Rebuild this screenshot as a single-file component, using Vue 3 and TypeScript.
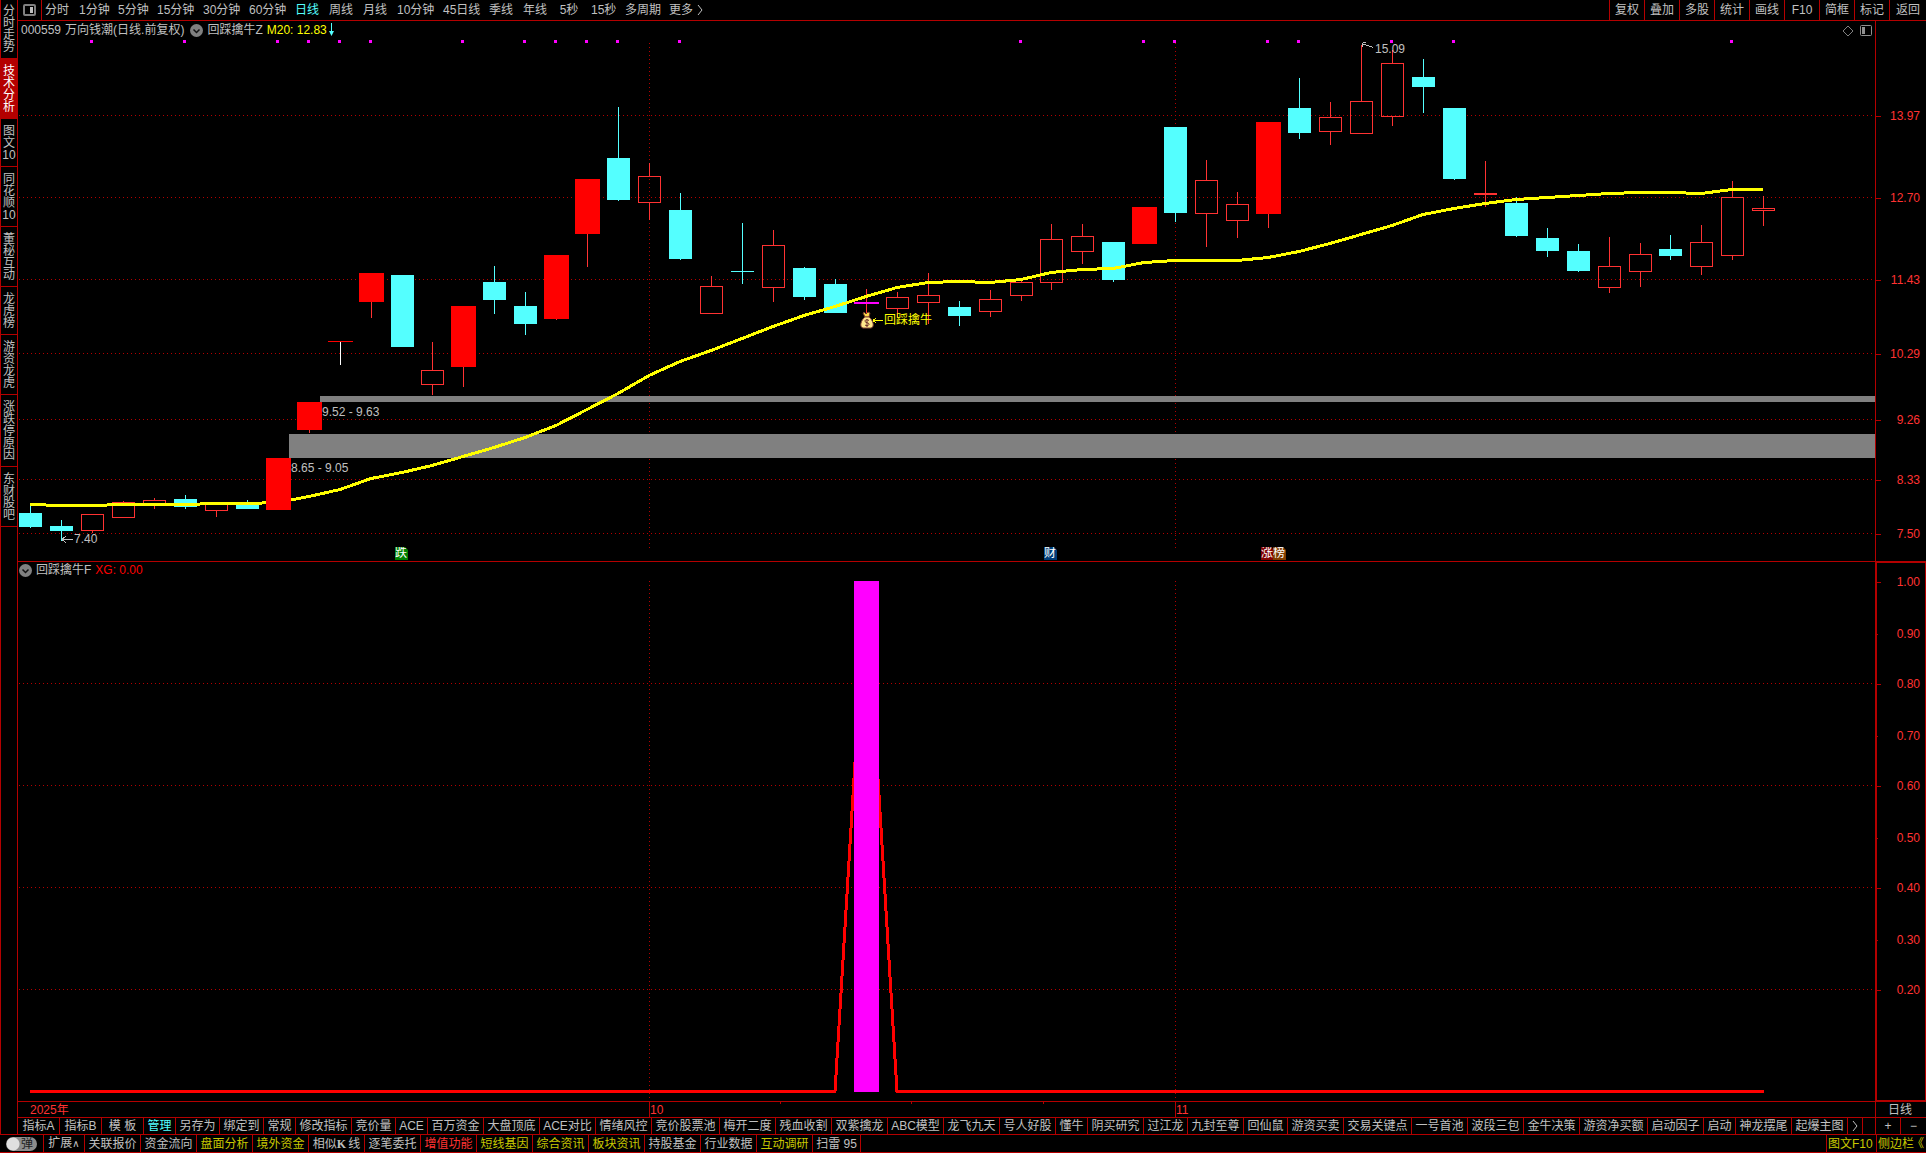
<script setup lang="ts">
interface Tab { text: string; size: string; tone?: string }

const sideTabs: { lines: string[]; active?: boolean }[] = [
  { lines: ['分', '时', '走', '势'] },
  { lines: ['技', '术', '分', '析'], active: true },
  { lines: ['图', '文', '10'] },
  { lines: ['同', '花', '顺', '10'] },
  { lines: ['董', '秘', '互', '动'] },
  { lines: ['龙', '虎', '榜'] },
  { lines: ['游', '资', '龙', '虎'] },
  { lines: ['涨', '跌', '停', '原', '因'] },
  { lines: ['东', '财', '股', '吧'] },
]

const periods: Tab[] = [
  { text: '分时', size: 'p2' }, { text: '1分钟', size: 'p3' }, { text: '5分钟', size: 'p3' },
  { text: '15分钟', size: 'p5' }, { text: '30分钟', size: 'p5' }, { text: '60分钟', size: 'p5' },
  { text: '日线', size: 'p2', tone: 'cyan' }, { text: '周线', size: 'p2' }, { text: '月线', size: 'p2' },
  { text: '10分钟', size: 'p5' }, { text: '45日线', size: 'p5' }, { text: '季线', size: 'p2' },
  { text: '年线', size: 'p2' }, { text: '5秒', size: 'p2' }, { text: '15秒', size: 'p2' },
  { text: '多周期', size: 'p4' }, { text: '更多', size: 'p1' },
]

const tools = ['复权', '叠加', '多股', '统计', '画线', 'F10', '简框', '标记', '返回']

const templates: Tab[] = [
  { text: '指标A', size: 'n1' }, { text: '指标B', size: 'n1' }, { text: '模 板', size: 'n1' },
  { text: '管理', size: 'n2', tone: 'cyan' }, { text: '另存为', size: 'n3' }, { text: '绑定到', size: 'n3' },
  { text: '常规', size: 'n2' }, { text: '修改指标', size: 'n4' }, { text: '竞价量', size: 'n3' },
  { text: 'ACE', size: 'n2' }, { text: '百万资金', size: 'n4' }, { text: '大盘顶底', size: 'n4' },
  { text: 'ACE对比', size: 'n4' }, { text: '情绪风控', size: 'n4' }, { text: '竞价股票池', size: 'n5' },
  { text: '梅开二度', size: 'n4' }, { text: '残血收割', size: 'n4' }, { text: '双紫擒龙', size: 'n4' },
  { text: 'ABC模型', size: 'n4' }, { text: '龙飞九天', size: 'n4' }, { text: '号人好股', size: 'n4' },
  { text: '懂牛', size: 'n2' }, { text: '阴买研究', size: 'n4' }, { text: '过江龙', size: 'n3' },
  { text: '九封至尊', size: 'n4' }, { text: '回仙鼠', size: 'n3' }, { text: '游资买卖', size: 'n4' },
  { text: '交易关键点', size: 'n5' }, { text: '一号首池', size: 'n4' }, { text: '波段三包', size: 'n4' },
  { text: '金牛决策', size: 'n4' }, { text: '游资净买额', size: 'n5' }, { text: '启动因子', size: 'n4' },
  { text: '启动', size: 'n2' }, { text: '神龙摆尾', size: 'n4' }, { text: '起爆主图', size: 'n4' },
]

const services: Tab[] = [
  { text: '关联报价', size: 'n4' }, { text: '资金流向', size: 'n4' },
  { text: '盘面分析', size: 'n4', tone: 'gold' }, { text: '境外资金', size: 'n4', tone: 'gold' },
  { text: '相似K线', size: 'n4' }, { text: '逐笔委托', size: 'n4' },
  { text: '增值功能', size: 'n4', tone: 'rose' }, { text: '短线基因', size: 'n4', tone: 'gold' },
  { text: '综合资讯', size: 'n4', tone: 'gold' }, { text: '板块资讯', size: 'n4', tone: 'gold' },
  { text: '持股基金', size: 'n4' }, { text: '行业数据', size: 'n4' },
  { text: '互动调研', size: 'n4', tone: 'gold' }, { text: '扫雷 95', size: 'n6' },
]

// Drawing space shared by both panes; each pane is 1857 x 540 units.
const X0 = 18
const W = 1857
const H = 540
const TOP1 = 21
const TOP2 = 561
const pctX = (x: number) => `${((x - X0) / W) * 100}%`
const pctY = (y: number, top: number) => `${((y - top) / H) * 100}%`

// Centre column of the i-th trading day.
const cx = (i: number) => 30 + 31 * i - Math.floor((i + 7) / 20)

// c = falling, h = rising (hollow), r = limit-up block; then high, body top, body bottom, low
type Candle = ['c' | 'h' | 'r', number, number, number, number]
const candles: Candle[] = [
  ['c', 505, 513, 527, 528], ['c', 520, 526, 531, 541], ['h', 514, 514, 531, 533], ['h', 501, 502, 518, 518],
  ['h', 498, 500, 504, 509], ['c', 495, 499, 507, 509], ['h', 503, 503, 511, 517], ['c', 500, 503, 509, 509],
  ['r', 458, 458, 510, 510], ['r', 402, 402, 430, 433], ['r', 341, 341, 342, 342], ['r', 273, 273, 302, 318],
  ['c', 275, 275, 347, 347], ['h', 342, 370, 385, 395], ['r', 306, 306, 367, 387], ['c', 266, 282, 300, 314],
  ['c', 292, 306, 324, 335], ['r', 255, 255, 319, 320], ['r', 179, 179, 234, 267], ['c', 107, 158, 200, 201],
  ['h', 163, 176, 203, 220], ['c', 193, 210, 259, 260], ['h', 276, 286, 314, 314], ['c', 223, 271, 272, 284],
  ['h', 230, 245, 288, 302], ['c', 267, 268, 297, 300], ['c', 279, 284, 313, 313], ['h', 289, 302, 304, 313],
  ['h', 292, 297, 309, 318], ['h', 273, 295, 303, 324], ['c', 301, 307, 316, 326], ['h', 290, 299, 312, 317],
  ['h', 280, 282, 296, 301], ['h', 224, 239, 283, 290], ['h', 224, 236, 252, 264], ['c', 242, 242, 280, 282],
  ['r', 207, 207, 244, 244], ['c', 127, 127, 213, 222], ['h', 160, 180, 214, 247], ['h', 192, 204, 221, 238],
  ['r', 122, 122, 214, 228], ['c', 78, 108, 133, 139], ['h', 102, 117, 132, 145], ['h', 45, 101, 134, 134],
  ['h', 50, 63, 117, 126], ['c', 59, 77, 87, 113], ['c', 108, 108, 179, 180], ['h', 161, 193, 195, 207],
  ['c', 197, 203, 236, 237], ['c', 228, 238, 251, 257], ['c', 244, 251, 271, 272], ['h', 237, 266, 288, 293],
  ['h', 243, 254, 272, 287], ['c', 235, 249, 256, 260], ['h', 225, 242, 267, 275], ['h', 181, 197, 256, 260],
  ['h', 196, 208, 211, 226],
]
const indexed = candles.map(([kind, high, top, bottom, low], i) => ({ kind, high, top, bottom, low, x: cx(i) }))
const thin = indexed.filter(c => c.kind !== 'r')
const blocks = indexed.filter(c => c.kind === 'r')

const average = [
  504, 505, 505, 504, 504, 504, 503, 503, 502, 496, 489, 478, 472, 465, 456, 447, 437, 425, 409, 393, 375, 361,
  350, 338, 326, 315, 306, 296, 287, 282, 281, 282, 279, 272, 269, 268, 262, 260, 260, 260, 257, 251, 243, 234,
  225, 214, 208, 203, 199, 197, 195, 193, 192, 192, 193, 189, 189,
]
const averagePoints = average.map((y, i) => `${cx(i)},${y + 0.5}`).join(' ')

const signalDays = [2, 5, 8, 9, 10, 11, 14, 16, 17, 18, 19, 21, 32, 36, 37, 40, 41, 44, 46, 55]
const months = [649, 1175]
const priceTicks = [
  { y: 115, text: '13.97' }, { y: 197, text: '12.70' }, { y: 279, text: '11.43' }, { y: 353, text: '10.29' },
  { y: 419, text: '9.26' }, { y: 479, text: '8.33' }, { y: 533, text: '7.50' },
]
const signalTicks = [
  { y: 581, text: '1.00', major: true }, { y: 633, text: '0.90' }, { y: 683, text: '0.80', major: true },
  { y: 735, text: '0.70' }, { y: 785, text: '0.60', major: true }, { y: 837, text: '0.50' },
  { y: 887, text: '0.40', major: true }, { y: 939, text: '0.30' }, { y: 989, text: '0.20', major: true },
]
const badges = [
  { x: 395, text: '跌', tone: 'green' }, { x: 1044, text: '财', tone: 'blue' },
  { x: 1261, text: '涨', tone: 'maroon' }, { x: 1273, text: '榜', tone: 'brown' },
]
const notes = [
  { x: 322, y: 412, text: '9.52 - 9.63' }, { x: 291, y: 468, text: '8.65 - 9.05' },
  { x: 74, y: 539, text: '7.40' }, { x: 1375, y: 49, text: '15.09' },
]
</script>

<template>
  <div class="app">
    <div class="body">
      <nav class="side">
        <button v-for="tab in sideTabs" :key="tab.lines.join('')" :class="{ active: tab.active }">
          <span v-for="(line, n) in tab.lines" :key="n">{{ line }}</span>
        </button>
      </nav>

      <div class="main">
        <header class="topbar">
          <button class="layout" aria-label="布局">
            <svg width="13" height="12" viewBox="0 0 13 12">
              <rect x="1" y="1" width="11" height="10" rx="1" fill="none" stroke="#808080" stroke-width="2" />
              <rect x="7" y="3" width="3" height="6" fill="#c0c0c0" />
            </svg>
          </button>
          <div class="periods">
            <button v-for="p in periods" :key="p.text" :class="[p.size, p.tone]"><span>{{ p.text }}</span></button>
            <svg width="6" height="12" viewBox="0 0 6 12">
              <path d="M1 1 L5 6 L1 11" fill="none" stroke="#c0c0c0" />
            </svg>
          </div>
          <div class="tools">
            <button v-for="t in tools" :key="t">{{ t }}</button>
          </div>
        </header>

        <section class="pane">
          <div class="plot">
            <svg class="canvas" :viewBox="`${X0} ${TOP1} ${W} ${H}`" preserveAspectRatio="none" shape-rendering="crispEdges">
              <g stroke="#b40000" stroke-dasharray="1 3">
                <line v-for="t in priceTicks" :key="t.y" x1="19" :x2="1874" :y1="t.y + 0.5" :y2="t.y + 0.5" />
                <line v-for="m in months" :key="m" :x1="m + 0.5" :x2="m + 0.5" y1="43" y2="549" />
              </g>
              <g fill="#808080">
                <rect x="320" y="396" width="1555" height="6" />
                <rect x="289" y="434" width="1586" height="24" />
              </g>
              <rect v-for="d in signalDays" :key="d" :x="cx(d) - 2" y="40" width="3" height="3" fill="#f0f" />
              <g v-for="c in thin" :key="c.x" :fill="c.kind === 'c' ? '#54ffff' : '#ff3232'">
                <rect :x="c.x" :y="c.high" width="1" :height="c.top - c.high" />
                <rect :x="c.x" :y="c.bottom" width="1" :height="c.low - c.bottom" />
                <rect v-if="c.kind === 'c' || c.bottom - c.top < 3" :x="c.x - 11" :y="c.top" width="23" :height="c.bottom - c.top" />
                <rect v-else :x="c.x - 10.5" :y="c.top + 0.5" width="22" :height="c.bottom - c.top - 1" fill="none" stroke="#ff3232" />
              </g>
              <polyline :points="averagePoints" fill="none" stroke="#ff0" stroke-width="3" />
              <g v-for="c in blocks" :key="c.x">
                <rect :x="c.x" :y="c.bottom" width="1" :height="c.low - c.bottom" fill="#ff3232" />
                <rect :x="c.x - 12" :y="c.top" width="25" :height="c.bottom - c.top" fill="#f00" />
              </g>
              <rect x="340" y="342" width="1" height="23" fill="#fff" />
              <rect x="854" y="302" width="25" height="2" fill="#f0f" />
              <g fill="none" stroke="#c0c0c0">
                <path d="M62 539.5 H73 M62 539.5 L66 536 M62 539.5 L66 543" />
                <path d="M1362 43.5 L1373 47.5 M1362 43.5 L1366 42 M1362 43.5 L1363 47" />
              </g>
              <path d="M873 320.5 H883 M873 320.5 L876 318 M873 320.5 L876 323" fill="none" stroke="#ff0" />
              <g shape-rendering="auto">
                <path d="M864 312 L866 314 L868 312 L870 313 L869 317 H865 L863 313 Z" fill="#ffd94a" stroke="#6b3a2a" />
                <path d="M865 317 H869 C873 320 875 327 871 328 H863 C859 327 861 320 865 317 Z" fill="#ffe98c" stroke="#8c4a3a" />
                <path d="M869 320.5 C867 319 864.500 320 865 321.500 C865.500 323 869.500 322.500 869 324.500 C868.500 326 866 326 865 325 M867 319 V327" fill="none" stroke="#6b2a2a" />
              </g>
            </svg>
            <div class="caption">
              <span class="code">000559</span>
              <span class="stock">万向钱潮(日线.前复权)</span>
              <svg class="drop" width="13" height="13" viewBox="0 0 13 13">
                <circle cx="6.500" cy="6.500" r="6.500" fill="#808080" />
                <path d="M3.500 5.500 L6.500 8.500 L9.500 5.500" fill="none" stroke="#111" stroke-width="1.500" />
              </svg>
              <span class="name">回踩擒牛Z</span>
              <span class="yellow">M20: 12.83</span>
              <svg class="fall" width="7" height="14" viewBox="0 0 7 14" fill="#54ffff">
                <path d="M3 0 H4 V8 H6 L3.500 13 L1 8 H3 Z" />
              </svg>
            </div>
            <div class="corner">
              <svg width="12" height="12" viewBox="0 0 12 12"><path d="M6 1 L11 6 L6 11 L1 6 Z" fill="none" stroke="#808080" /></svg>
              <svg width="12" height="11" viewBox="0 0 12 11">
                <rect x="0.500" y="0.500" width="11" height="10" rx="1" fill="none" stroke="#909090" />
                <rect x="2" y="2" width="3" height="7" fill="#909090" />
              </svg>
            </div>
            <span v-for="n in notes" :key="n.text" class="note" :style="{ left: pctX(n.x), top: pctY(n.y, TOP1) }">{{ n.text }}</span>
            <span class="note yellow" :style="{ left: pctX(884), top: pctY(320, TOP1) }">回踩擒牛</span>
            <span v-for="b in badges" :key="b.text" class="badge" :class="b.tone" :style="{ left: pctX(b.x) }">{{ b.text }}</span>
          </div>
          <div class="axis">
            <span v-for="t in priceTicks" :key="t.y" class="tick major" :style="{ top: pctY(t.y + 0.5, TOP1) }">{{ t.text }}</span>
          </div>
        </section>

        <section class="pane lower">
          <div class="plot">
            <svg class="canvas" :viewBox="`${X0} ${TOP2} ${W} ${H}`" preserveAspectRatio="none" shape-rendering="crispEdges">
              <g stroke="#b40000" stroke-dasharray="1 3">
                <line v-for="y in [683, 785, 887, 989]" :key="y" x1="19" x2="1874" :y1="y + 0.5" :y2="y + 0.5" />
                <line v-for="m in months" :key="m" :x1="m + 0.5" :x2="m + 0.5" y1="581" y2="1098" />
              </g>
              <polyline points="30,1091.500 835,1091.500 866,581 897,1091.500 1764,1091.500" fill="none" stroke="#f00" stroke-width="3" stroke-linejoin="bevel" />
              <rect x="854" y="581" width="25" height="511" fill="#f0f" />
            </svg>
            <div class="caption">
              <svg class="drop" width="13" height="13" viewBox="0 0 13 13">
                <circle cx="6.500" cy="6.500" r="6.500" fill="#808080" />
                <path d="M3.500 5.500 L6.500 8.500 L9.500 5.500" fill="none" stroke="#111" stroke-width="1.500" />
              </svg>
              <span class="name">回踩擒牛F</span>
              <span class="red">XG: 0.00</span>
            </div>
          </div>
          <div class="axis boxed">
            <span v-for="t in signalTicks" :key="t.y" class="tick" :class="{ major: t.major }" :style="{ top: pctY(t.y + 0.5, TOP2) }">{{ t.text }}</span>
          </div>
        </section>

        <div class="timeline">
          <div class="dates">
            <span class="year" :style="{ left: pctX(30) }">2025年</span>
            <span class="month" :style="{ left: pctX(649) }">10</span>
            <span class="month" :style="{ left: pctX(1175) }">11</span>
            <i v-for="x in [780, 911, 1043]" :key="x" :style="{ left: pctX(x) }"></i>
          </div>
          <div class="unit">日线</div>
        </div>

        <div class="templates">
          <button v-for="t in templates" :key="t.text" :class="[t.size, t.tone]">{{ t.text }}</button>
          <button class="next" aria-label="下一页">
            <svg width="6" height="12" viewBox="0 0 6 12"><path d="M1 1 L5 6 L1 11" fill="none" stroke="#c0c0c0" /></svg>
          </button>
          <div class="zoom">
            <button>+</button>
            <button>−</button>
          </div>
        </div>
      </div>
    </div>

    <footer class="services">
      <label class="toggle"><input type="checkbox" /><span>弹</span></label>
      <button class="expand">扩展<span>∧</span></button>
      <button v-for="s in services" :key="s.text" :class="[s.size, s.tone]">
        <template v-if="s.text === '相似K线'">相似<b>K</b>线</template>
        <template v-else>{{ s.text }}</template>
      </button>
      <div class="links">
        <a href="#">图文F10</a>
        <a href="#" class="sidebar-link"><span>侧边栏</span><span class="chevron">《</span></a>
      </div>
    </footer>
  </div>
</template>

<style>
body {
  margin: 0;
  background: #000;
}
</style>

<style scoped>
.app {
  --line: #b40000;
  display: flex;
  flex-direction: column;
  min-height: 100vh;
  background: #000;
  color: #c0c0c0;
  font: 12px/14px "Liberation Sans", "Noto Sans CJK SC", sans-serif;
  white-space: nowrap;
  overflow: hidden;
}
button {
  box-sizing: border-box;
  margin: 0;
  padding: 0;
  border: 0;
  background: none;
  color: inherit;
  font: inherit;
  white-space: nowrap;
}
a {
  color: inherit;
  text-decoration: none;
}
svg {
  display: block;
  flex: none;
}
.cyan { color: #54ffff; }
.gold { color: #c8c800; }
.rose { color: #ff3232; }
.yellow { color: #ff0; }
.red { color: #f00; }

.body {
  display: flex;
  flex: 1;
}
.side {
  display: flex;
  flex-direction: column;
  flex: none;
  box-sizing: border-box;
  width: 18px;
  border: solid var(--line);
  border-width: 0 1px;
}
.side button {
  display: flex;
  flex-direction: column;
  align-items: center;
  padding: 6px 0 5px;
  border-bottom: 1px solid var(--line);
  line-height: 12px;
}
.side button:first-child {
  padding-top: 5px;
}
.side .active {
  background: var(--line);
  color: #fff;
}
.main {
  display: flex;
  flex-direction: column;
  flex: 1;
  min-width: 0;
}

.topbar {
  display: flex;
  height: 20px;
  border-bottom: 1px solid var(--line);
}
.layout {
  display: flex;
  align-items: center;
  padding: 0 5px;
  border-right: 1px solid var(--line);
}
.periods {
  display: flex;
  align-items: center;
  padding-left: 3px;
}
.periods button {
  text-align: left;
}
.periods span {
  display: inline-block;
  min-width: 24px;
  text-align: center;
}
.p1 { width: 28px; }
.p2 { width: 34px; }
.p3 { width: 39px; }
.p4 { width: 44px; }
.p5 { width: 46px; }
.tools {
  display: flex;
  margin-left: auto;
}
.tools button {
  width: 35px;
  border-left: 1px solid var(--line);
}
.tools button:last-child {
  width: 37px;
}

.pane {
  display: flex;
  flex: 1 1 540px;
}
.plot {
  position: relative;
  flex: 1;
  min-width: 0;
}
.canvas {
  position: absolute;
  width: 100%;
  height: 100%;
}
.lower .plot::before {
  content: "";
  position: absolute;
  width: 100%;
  border-top: 1px solid var(--line);
}
.caption {
  position: relative;
  display: flex;
  align-items: center;
  height: 18px;
  padding-left: 3px;
}
.lower .caption {
  padding-left: 1px;
}
.code { margin-right: 4px; }
.stock { margin-right: 6px; }
.drop { margin-right: 4px; }
.name { margin-right: 4px; }
.fall { margin-left: 1px; }
.corner {
  position: absolute;
  top: 4px;
  right: 3px;
  display: flex;
  gap: 6px;
}
.note {
  position: absolute;
  transform: translateY(-50%);
}
.badge {
  position: absolute;
  bottom: 1px;
  width: 13px;
  height: 13px;
  color: #fff;
  line-height: 13px;
  clip-path: polygon(0 0, 10px 0, 13px 3px, 13px 13px, 0 13px);
}
.green { background: #008000; }
.blue { background: #003c78; }
.maroon { background: #800000; }
.brown { background: #803c00; }
.axis {
  position: relative;
  flex: none;
  box-sizing: border-box;
  width: 51px;
  border-left: 1px solid var(--line);
  color: #ff3232;
}
.boxed::before {
  content: "";
  position: absolute;
  inset: 0 0 0 -1px;
  border: 2px solid var(--line);
  border-width: 2px 1px 1px 2px;
}
.tick {
  position: absolute;
  left: 0;
  right: 6px;
  text-align: right;
  transform: translateY(-50%);
}
.tick::before {
  content: "";
  position: absolute;
  left: 0;
  top: 7px;
  width: 2px;
  height: 1px;
  background: var(--line);
}
.major::before {
  width: 5px;
}

.timeline {
  display: flex;
  height: 15px;
  border-top: 1px solid var(--line);
  line-height: 16px;
}
.dates {
  position: relative;
  flex: 1;
  color: #ff3232;
}
.year,
.month {
  position: absolute;
}
.month {
  height: 15px;
  border-left: 1px solid var(--line);
}
.dates i {
  position: absolute;
  width: 1px;
  height: 2px;
  background: var(--line);
}
.unit {
  box-sizing: border-box;
  width: 51px;
  border-left: 1px solid var(--line);
  padding-left: 12px;
}

.templates,
.services {
  display: flex;
  border-top: 1px solid var(--line);
}
.templates {
  height: 16px;
}
.templates button,
.services button {
  flex: none;
  border-right: 1px solid var(--line);
}
.n1 { width: 42px; }
.n2 { width: 32px; }
.n3 { width: 44px; }
.n4 { width: 56px; }
.n5 { width: 68px; }
.n6 { width: 48px; }
.next {
  display: flex;
  align-items: center;
  justify-content: center;
  width: 15px;
}
.zoom {
  display: flex;
  box-sizing: border-box;
  width: 51px;
  margin-left: auto;
  border-left: 1px solid var(--line);
}
.zoom button {
  width: 25px;
}
.zoom button:last-child {
  border-right: 0;
}

.services {
  height: 17px;
  border-bottom: 1px solid var(--line);
}
.toggle {
  display: flex;
  align-items: center;
  box-sizing: border-box;
  width: 44px;
  padding-left: 6px;
  border-right: 1px solid var(--line);
}
.toggle input {
  appearance: none;
  flex: none;
  box-sizing: border-box;
  width: 31px;
  height: 14px;
  margin: 0;
  border-radius: 7px;
  background: radial-gradient(circle at 7px 7px, #e0e0e0 6px, transparent 7px), #8c8c8c;
}
.toggle span {
  z-index: 1;
  margin-left: -16px;
  color: #202020;
}
.expand {
  width: 41px;
}
.expand span {
  font-family: "DejaVu Sans", sans-serif;
  font-size: 10px;
}
.services b {
  margin-right: 2px;
  font-family: "Liberation Serif", serif;
}
.links {
  display: flex;
  margin-left: auto;
  color: #c8c800;
  line-height: 18px;
}
.links a {
  box-sizing: border-box;
  width: 50px;
  padding-left: 1px;
  border-left: 1px solid var(--line);
}
.links .sidebar-link {
  display: flex;
  justify-content: space-between;
  padding: 0 2px 0 1px;
}
.chevron {
  display: flex;
  justify-content: flex-end;
  width: 10px;
}
</style>
